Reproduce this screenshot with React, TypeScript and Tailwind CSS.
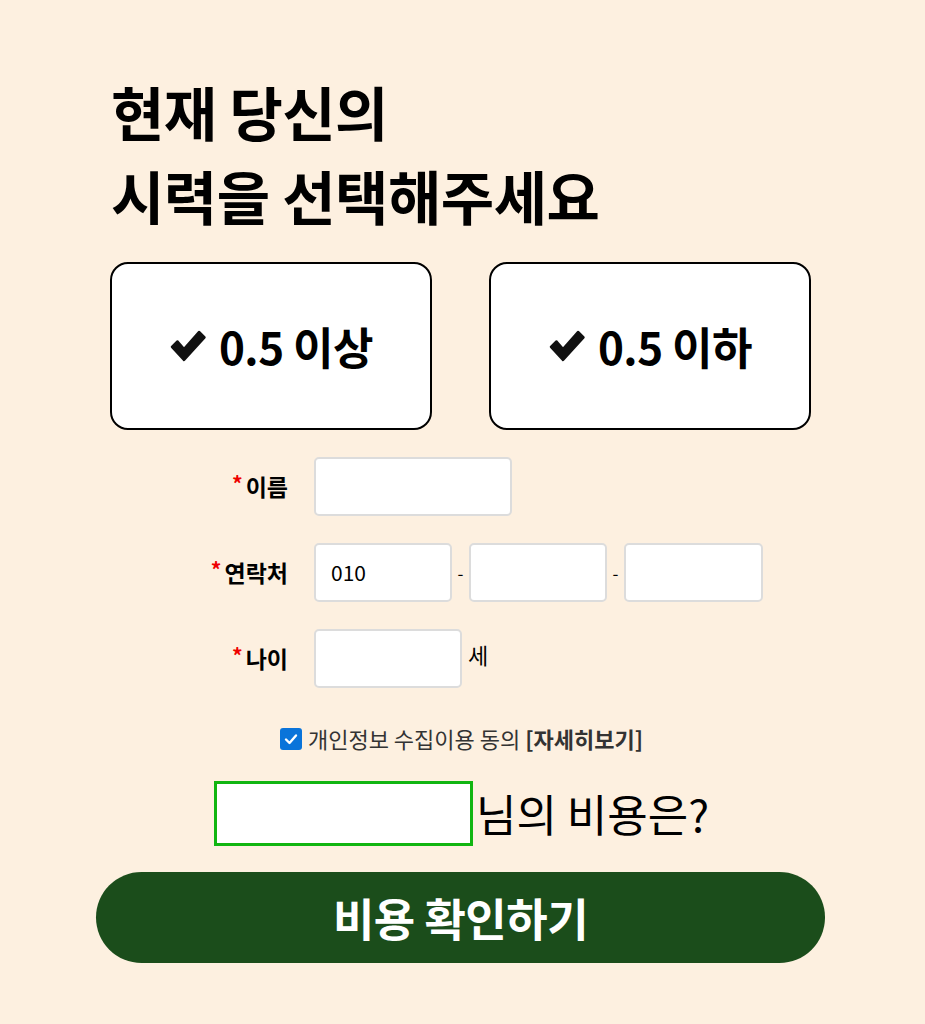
import React from "react";

const font = { fontFamily: '"Noto Sans CJK KR", "Noto Sans", sans-serif' };

function Check() {
  return (
    <svg width="38" height="34" viewBox="0 0 38 34" className="shrink-0">
      <path d="M3 18 L8.5 12.5 L15 20 L30 3 L35.5 8.5 L15 31 Z" fill="#111" strokeLinejoin="round" stroke="#111" strokeWidth="2.5" />
    </svg>
  );
}

function Label({ text }: { text: string }) {
  return (
    <div className="w-[218px] flex justify-end items-center pr-[26px] text-[23px] font-bold text-black">
      <span className="text-[#e00] text-[21px] mr-[3px] -mt-[6px]">*</span>
      <span>{text}</span>
    </div>
  );
}

function Box({ w, value }: { w: string; value?: string }) {
  return (
    <div className={`${w} h-[59px] bg-white border-2 border-[#dcdcdc] rounded-[5px] flex items-center pl-[15px] text-[21px] text-black`}>
      {value}
    </div>
  );
}

export default function App() {
  return (
    <div className="w-[925px] min-h-[1024px] bg-[#fdf0e0]" style={font}>
      <div className="w-[729px] ml-[96px] pt-[69px]">
        <h1 className="pl-[15px] text-[58px] font-bold leading-[84px] text-black tracking-[-0.5px]">
          현재 당신의
          <br />
          시력을 선택해주세요
        </h1>
        <div className="mt-[25px] pl-[14px] flex gap-[57px]">
          {["0.5 이상", "0.5 이하"].map((t) => (
            <div key={t} className="w-[322px] h-[168px] bg-white border-2 border-black rounded-[18px] flex items-center justify-center gap-[12px]">
              <Check />
              <span className="text-[44px] font-bold text-black tracking-[-0.5px]">{t}</span>
            </div>
          ))}
        </div>
        <div className="mt-[27px] flex flex-col gap-[27px]">
          <div className="flex items-center">
            <Label text="이름" />
            <Box w="w-[198px]" />
          </div>
          <div className="flex items-center">
            <Label text="연락처" />
            <Box w="w-[138px]" value="010" />
            <span className="w-[17px] text-center text-[17px] text-black">-</span>
            <Box w="w-[138px]" />
            <span className="w-[17px] text-center text-[17px] text-black">-</span>
            <Box w="w-[139px]" />
          </div>
          <div className="flex items-center">
            <Label text="나이" />
            <Box w="w-[148px]" />
            <span className="ml-[6px] -mt-[8px] text-[22px] text-black">세</span>
          </div>
        </div>
        <div className="mt-[34px] flex items-center justify-center gap-[6px] pl-[2px]">
          <div className="w-[22px] h-[22px] rounded-[3px] bg-[#0a74da] flex items-center justify-center">
            <svg width="16" height="16" viewBox="0 0 16 16">
              <path d="M3 8.5 L6.5 12 L13 4.5" fill="none" stroke="white" strokeWidth="2.4" strokeLinecap="round" strokeLinejoin="round" />
            </svg>
          </div>
          <span className="text-[22px] text-[#333]">
            개인정보 수집이용 동의 <b className="font-bold">[자세히보기]</b>
          </span>
        </div>
        <div className="mt-[25px] flex items-center pl-[118px]">
          <div className="w-[259px] h-[65px] bg-white border-[3px] border-[#11b511]" />
          <span className="ml-[3px] text-[44px] text-black">님의 비용은?</span>
        </div>
        <button className="mt-[26px] w-[729px] h-[91px] rounded-full bg-[#1b4d1b] text-white text-[45px] font-bold tracking-[-0.5px]">
          비용 확인하기
        </button>
      </div>
    </div>
  );
}
